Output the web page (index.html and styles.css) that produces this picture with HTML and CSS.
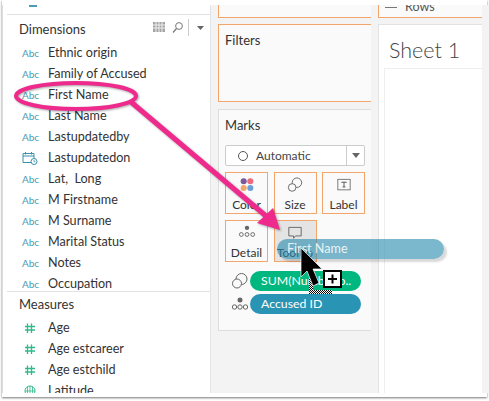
FILE: index.html
```html
<!DOCTYPE html>
<html lang="en">
<head>
    <meta charset="UTF-8">
    <title>Sheet 1</title>
    <link rel="stylesheet" href="styles.css">
</head>
<body>
    <div class="window">
        <div class="data-pane">
            <div class="pane-top"><span class="top-mark"></span></div>
            <div class="dimensions">
                <div class="pane-head">
                    <span class="pane-title">Dimensions</span>
                    <svg class="head-icons" width="58" height="20" viewBox="0 0 58 20">
                        <path d="M1 3h12v10H1z" fill="#a5a5a5"/>
                        <path d="M4 3v10M7 3v10M10 3v10M1 6h12M1 9h12" stroke="#eee" stroke-width="1"/>
                        <circle cx="27" cy="7" r="3.400" fill="none" stroke="#777"/>
                        <path d="M24.500 9.500 L21 13.500" stroke="#777" stroke-width="1.200"/>
                        <path d="M36.500 0v17" stroke="#ccc"/>
                        <path d="M45 7h7l-3.500 4z" fill="#666"/>
                    </svg>
                </div>
                <ul class="fields">
                    <li><span class="abc">Abc</span>Ethnic origin</li>
                    <li><span class="abc">Abc</span>Family of Accused</li>
                    <li><span class="abc">Abc</span>First Name</li>
                    <li><span class="abc">Abc</span>Last Name</li>
                    <li><span class="abc">Abc</span>Lastupdatedby</li>
                    <li>
                        <svg class="field-icon" width="16" height="14" viewBox="0 0 16 14">
                            <path d="M1 2.500h11v9H1zM1 5h11M3.500 1v2.500M9.500 1v2.500" fill="none" stroke="#3d8fae"/>
                            <circle cx="12" cy="10.500" r="3" fill="#fff" stroke="#3d8fae"/>
                            <path d="M12 9v1.700h1.300" fill="none" stroke="#3d8fae" stroke-width=".8"/>
                        </svg>Lastupdatedon
                    </li>
                    <li><span class="abc">Abc</span>Lat,&nbsp; Long</li>
                    <li><span class="abc">Abc</span>M Firstname</li>
                    <li><span class="abc">Abc</span>M Surname</li>
                    <li><span class="abc">Abc</span>Marital Status</li>
                    <li><span class="abc">Abc</span>Notes</li>
                    <li><span class="abc">Abc</span>Occupation</li>
                </ul>
            </div>
            <div class="measures">
                <div class="pane-title">Measures</div>
                <ul class="fields">
                    <li>
                        <svg class="field-icon" width="16" height="14" viewBox="0 0 16 14">
                            <path d="M5.500 2.500v9.500M9.500 2.500v9.500M3 5.500h10M3 9h10" fill="none" stroke="#2fb98c" stroke-width="1.300"/>
                        </svg>Age
                    </li>
                    <li>
                        <svg class="field-icon" width="16" height="14" viewBox="0 0 16 14">
                            <path d="M5.500 2.500v9.500M9.500 2.500v9.500M3 5.500h10M3 9h10" fill="none" stroke="#2fb98c" stroke-width="1.300"/>
                        </svg>Age estcareer
                    </li>
                    <li>
                        <svg class="field-icon" width="16" height="14" viewBox="0 0 16 14">
                            <path d="M5.500 2.500v9.500M9.500 2.500v9.500M3 5.500h10M3 9h10" fill="none" stroke="#2fb98c" stroke-width="1.300"/>
                        </svg>Age estchild
                    </li>
                    <li>
                        <svg class="field-icon" width="16" height="14" viewBox="0 0 16 14">
                            <circle cx="8" cy="7" r="5" fill="none" stroke="#2fb98c"/>
                            <path d="M3 7h10M8 2v10M5.500 2.800v8.400M10.500 2.800v8.400" fill="none" stroke="#2fb98c" stroke-width=".8"/>
                        </svg>Latitude
                    </li>
                </ul>
            </div>
        </div>

        <div class="shelves">
            <div class="card card-stub"></div>
            <div class="card card-filters">Filters</div>
            <div class="card-marks">
                <div class="marks-title">Marks</div>
                <div class="mark-select">
                    <span class="mark-circle"></span>
                    <span class="mark-name">Automatic</span>
                    <span class="mark-drop"></span>
                </div>
                <div class="mark-grid">
                    <div class="mark-btn">
                        <svg width="20" height="20" viewBox="0 0 20 20">
                            <circle cx="6.500" cy="4.500" r="3.200" fill="#7a5a9a"/>
                            <circle cx="13.500" cy="4.500" r="3.200" fill="#ee6a7a"/>
                            <circle cx="6.500" cy="11.500" r="3.200" fill="#f2a66a"/>
                            <circle cx="13.500" cy="11.500" r="3.200" fill="#6a9fd8"/>
                        </svg>
                        <span>Color</span>
                    </div>
                    <div class="mark-btn">
                        <svg width="20" height="20" viewBox="0 0 20 20">
                            <circle cx="12" cy="6" r="5" fill="none" stroke="#666"/>
                            <circle cx="7" cy="11" r="4" fill="#fafafa" stroke="#666"/>
                        </svg>
                        <span>Size</span>
                    </div>
                    <div class="mark-btn">
                        <svg width="20" height="20" viewBox="0 0 20 20">
                            <rect x="3.500" y="2.500" width="13" height="11" fill="none" stroke="#777"/>
                            <path d="M7.500 6V5.500h5V6M10 5.500v5M8.500 10.500h3" fill="none" stroke="#555"/>
                        </svg>
                        <span>Label</span>
                    </div>
                    <div class="mark-btn">
                        <svg width="20" height="20" viewBox="0 0 20 20">
                            <circle cx="10" cy="3" r="2.300" fill="#666"/>
                            <circle cx="4" cy="10" r="2" fill="none" stroke="#666"/>
                            <circle cx="10" cy="10" r="2" fill="none" stroke="#666"/>
                            <circle cx="16" cy="10" r="2" fill="none" stroke="#666"/>
                        </svg>
                        <span>Detail</span>
                    </div>
                    <div class="mark-btn mark-hover">
                        <svg width="20" height="20" viewBox="0 0 20 20">
                            <path d="M3.500 2.500h13v9h-6l-2 2.500v-2.500h-5z" fill="none" stroke="#666"/>
                        </svg>
                        <span>Tooltip</span>
                    </div>
                </div>
                <div class="encoding">
                    <svg width="18" height="18" viewBox="0 0 18 18">
                        <circle cx="10.500" cy="7" r="5.500" fill="none" stroke="#666"/>
                        <circle cx="6" cy="11.500" r="4.500" fill="#fafafa" stroke="#666"/>
                    </svg>
                    <span class="pill pill-green">SUM(Number o..</span>
                </div>
                <div class="encoding">
                    <svg width="18" height="18" viewBox="0 0 18 18">
                        <circle cx="9" cy="5" r="2.500" fill="#666"/>
                        <circle cx="3.500" cy="12" r="2.200" fill="none" stroke="#666"/>
                        <circle cx="9" cy="12" r="2.200" fill="none" stroke="#666"/>
                        <circle cx="14.500" cy="12" r="2.200" fill="none" stroke="#666"/>
                    </svg>
                    <span class="pill pill-blue">Accused ID</span>
                </div>
            </div>
        </div>

        <div class="view">
            <div class="card rows-stub">
                <span class="rows-icon"></span>
                <span class="rows-label">Rows</span>
            </div>
            <div class="sheet">
                <div class="sheet-title">Sheet 1</div>
                <div class="sheet-body"></div>
            </div>
        </div>
    </div>

    <!-- annotation drawn over the screenshot -->
    <div class="drag-pill">First Name</div>
    <svg class="overlay" width="489" height="401" viewBox="0 0 489 401">
        <defs>
            <pattern id="dither" width="2" height="2" patternUnits="userSpaceOnUse">
                <rect width="2" height="2" fill="#fff"/>
                <rect width="1" height="1" fill="#000"/>
                <rect x="1" y="1" width="1" height="1" fill="#000"/>
            </pattern>
        </defs>
        <g class="annotation">
            <ellipse cx="76" cy="96" rx="60" ry="13" fill="none" stroke="#ee2a8c" stroke-width="4"/>
            <path d="M131 102 L266 216" stroke="#ee2a8c" stroke-width="5" fill="none"/>
            <path d="M280 230 L257 223 L273 208 Z" fill="#ee2a8c"/>
        </g>
        <path d="M309 277h4v13h19v4h-23z" fill="url(#dither)"/>
        <path d="M301 248 V277 L307 271 L313 286 L319 283 L313 269 H322 Z" fill="#000" stroke="#fff" stroke-width=".7"/>
        <rect x="324" y="271" width="17" height="16" fill="#fff" stroke="#000" stroke-width="2"/>
        <path d="M328 279h9M332.500 274.500v9" stroke="#000" stroke-width="2"/>
    </svg>
</body>
</html>
```

FILE: styles.css
```css
* {
    box-sizing: border-box;
}

html, body {
    margin: 0;
    height: 100%;
    overflow: hidden;
}

body {
    font-family: "Lato", sans-serif;
    background-color: #fff;
    color: #333;
    position: relative;
}

ul {
    list-style: none;
    margin: 0;
    padding: 0;
}

.window {
    position: absolute;
    left: 2px;
    top: 0;
    width: 485px;
    height: 397px;
    padding: 5px 5px 5px 0;
    background-color: #fff;
    display: flex;
    box-shadow: 0 1px 2px #777;
}

.data-pane {
    width: 209px;
    height: 388px;
    overflow: hidden;
    border-left: 1px solid #ddd;
    border-right: 1px solid #e4e4e4;
}

.pane-top {
    height: 10px;
    margin-left: 4px;
    border-bottom: 1px solid #e2e2e2;
}

.top-mark {
    display: block;
    width: 8px;
    height: 2px;
    margin-left: 22px;
    background-color: #4a9cb5;
}

.dimensions {
    height: 277px;
    border-bottom: 1px solid #e2e2e2;
    margin-left: 4px;
}

.pane-head {
    height: 27px;
    padding: 4px 0 0 12px;
    display: flex;
    justify-content: space-between;
}

.pane-title {
    font-size: 13px;
    line-height: 20px;
}

.measures {
    padding: 2px 0 0 16px;
}

.fields li {
    height: 21px;
    display: flex;
    align-items: center;
    font-size: 12.600px;
    white-space: nowrap;
}

.measures .fields {
    margin: 3px 0 0 -16px;
    padding-left: 4px;
}

.abc {
    width: 41px;
    padding-left: 15px;
    flex: none;
    font-size: 10px;
    color: #4a9cb5;
}

.field-icon {
    width: 16px;
    margin: 0 10px 0 15px;
    flex: none;
}

.shelves {
    width: 154px;
    margin: 0 6px 0 7px;
    flex: none;
}

.view {
    flex: 1;
    min-width: 0;
}

.shelves, .view {
    background-color: #f3f3f3;
    box-shadow: -7px 0 0 #f3f3f3, 6px 0 0 #f3f3f3;
    height: 388px;
}

.card {
    background-color: #fafafa;
    border: 1px solid #f3a66c;
}

.card-stub {
    height: 13px;
    border-top: 0;
}

.card-filters {
    height: 78px;
    margin-top: 6px;
    padding: 5px 6px;
    font-size: 13px;
    line-height: 20px;
}

.card-marks {
    height: 222px;
    margin-top: 7px;
    padding: 5px 6px;
    background-color: #fafafa;
    border: 1px solid #ddd;
}

.marks-title {
    font-size: 13px;
    line-height: 20px;
}

.mark-select {
    height: 21px;
    margin-top: 10px;
    display: flex;
    align-items: center;
    background-color: #fff;
    border: 1px solid #ccc;
    border-radius: 2px;
    font-size: 12px;
}

.mark-circle {
    width: 10px;
    height: 10px;
    margin-left: 12px;
    border: 1px solid #555;
    border-radius: 50%;
}

.mark-name {
    margin-left: 8px;
    flex: 1;
    color: #444;
}

.mark-drop {
    width: 18px;
    height: 100%;
    border-left: 1px solid #ccc;
    position: relative;
}

.mark-drop::after {
    content: "";
    position: absolute;
    left: 5px;
    top: 7px;
    border: 4px solid transparent;
    border-top: 5px solid #666;
}

.mark-grid {
    margin-top: 6px;
    display: grid;
    grid-template-columns: 43px 43px 43px;
    grid-auto-rows: 42px;
    gap: 6px 5.500px;
}

.mark-btn {
    display: flex;
    flex-direction: column;
    align-items: center;
    padding-top: 4px;
    font-size: 12px;
    border: 1px solid #f3a66c;
    background-color: #fafafa;
    overflow: hidden;
    line-height: 17px;
}

.mark-hover {
    background-color: #e4e4e4;
}

.encoding {
    height: 22px;
    margin-top: 1px;
    padding-left: 6px;
    display: flex;
    align-items: center;
    gap: 1px;
}

.mark-grid + .encoding {
    margin-top: 8px;
}

.pill {
    width: 111px;
    height: 20px;
    padding-left: 11px;
    border-radius: 10px;
    color: #fff;
    font-size: 12.300px;
    line-height: 20px;
    white-space: nowrap;
    overflow: hidden;
}

.pill-green {
    background-color: #00b77f;
}

.pill-blue {
    background-color: #2a94b4;
}

.rows-stub {
    height: 13px;
    border-top: 0;
    border-right: 0;
    padding-left: 6px;
    display: flex;
    align-items: flex-start;
    gap: 8px;
    overflow: hidden;
}

.rows-icon {
    width: 12px;
    height: 1px;
    margin-top: 2px;
    background-color: #777;
}

.rows-label {
    margin-top: -5px;
    font-size: 12.600px;
    line-height: 14px;
    color: #555;
}

.sheet {
    height: 369px;
    margin-top: 6px;
    padding-left: 5px;
    background-color: #fff;
    border-left: 1px solid #e2e2e2;
    border-top: 1px solid #e2e2e2;
}

.sheet-title {
    height: 43px;
    padding: 10px 0 0 5px;
    font-size: 21.500px;
    line-height: 30px;
    font-weight: 300;
    color: #444;
}

.sheet-body {
    height: 325px;
    border-top: 1px solid #eee;
    border-left: 1px solid #eee;
}

.drag-pill {
    position: absolute;
    left: 277px;
    top: 239px;
    width: 167px;
    height: 20px;
    padding-left: 10px;
    border-radius: 10px;
    background-color: rgba(42, 140, 175, 0.62);
    box-shadow: 3px 3px 2px rgba(0, 0, 0, 0.15);
    color: rgba(255, 255, 255, 0.85);
    font-size: 12.600px;
    line-height: 20px;
}

.overlay {
    position: absolute;
    left: 0;
    top: 0;
}

.annotation {
    filter: drop-shadow(1px 1px 1px rgba(0, 0, 0, 0.35));
}
```
